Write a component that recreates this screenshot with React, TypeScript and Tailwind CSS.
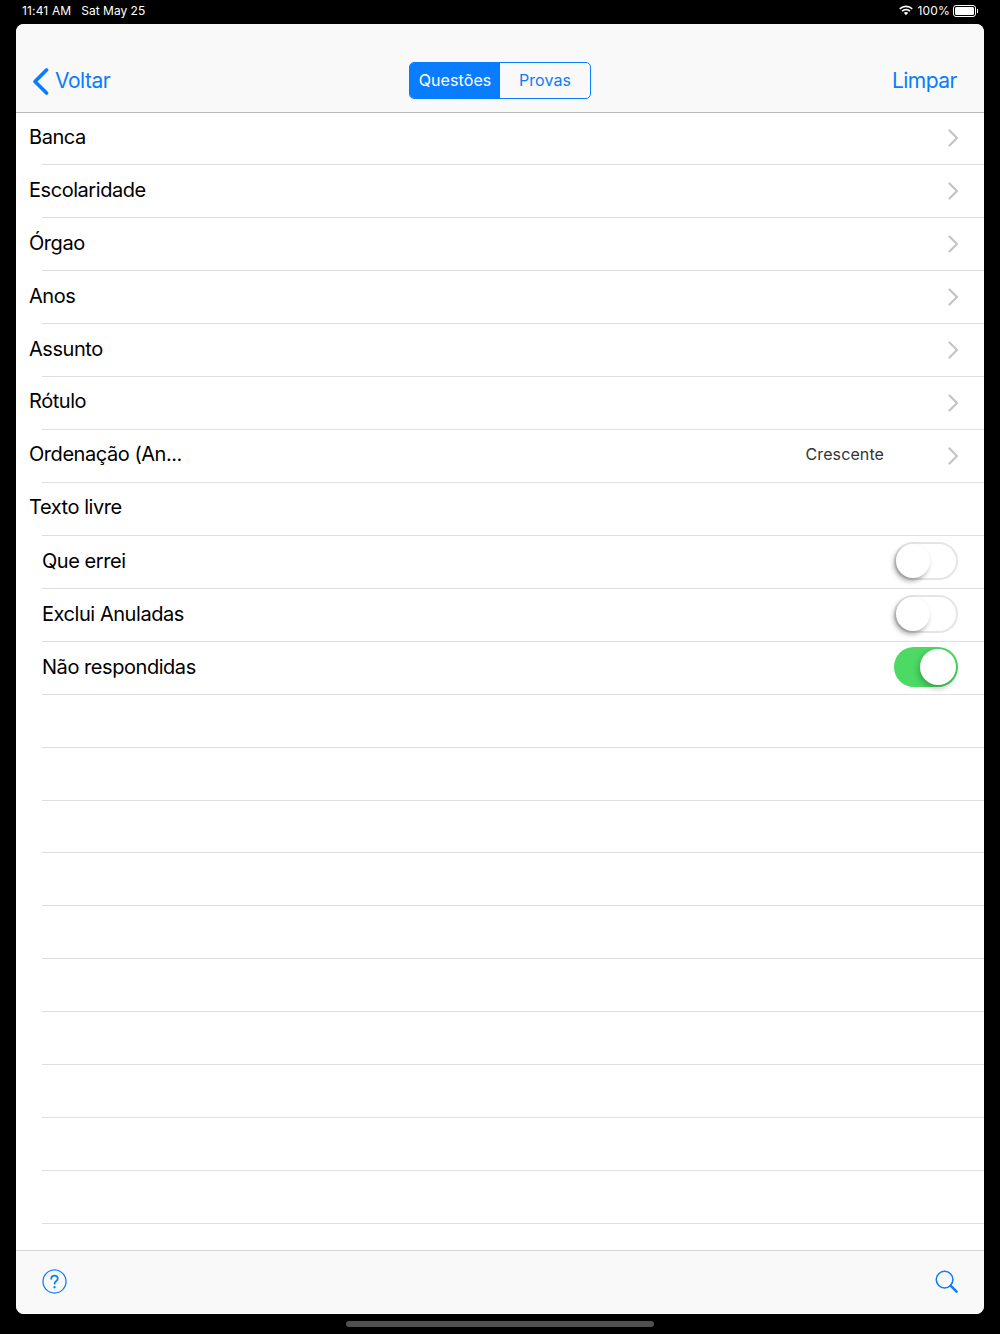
import React from 'react';

const font = { fontFamily: 'Inter, "Liberation Sans", sans-serif' };

const Chevron = () => (
  <svg width="12" height="18" viewBox="0 0 12 18" fill="none" className="shrink-0">
    <path d="M2.5 1.5 L10 9 L2.5 16.5" stroke="#c4c4c8" strokeWidth="2.2" strokeLinecap="round" strokeLinejoin="round" />
  </svg>
);

const Toggle = ({ on }: { on?: boolean }) =>
  on ? (
    <div className="relative h-[40px] w-[64px] rounded-full bg-[#4cd964]">
      <div className="absolute right-[2px] top-[2px] h-[36px] w-[36px] rounded-full bg-white shadow-[-1px_3px_6px_rgba(0,0,0,0.28)]" />
    </div>
  ) : (
    <div className="relative h-[38px] w-[64px] rounded-full border-2 border-[#e5e5e5] bg-white">
      <div className="absolute left-[0px] top-[0px] h-[34px] w-[34px] rounded-full bg-white shadow-[-2px_3px_5px_rgba(0,0,0,0.35)]" />
    </div>
  );

// row pitch in the picture is a hair under 53px
const Row = ({ children }: { children?: React.ReactNode }) => (
  <div className="flex h-[52.95px] flex-col">
    <div className="flex min-h-0 flex-1 items-center text-[20px] tracking-[-0.45px] text-black">{children}</div>
    <div className="ml-[26px] h-px shrink-0 bg-[#dedee0]" />
  </div>
);

const NavRow = ({ label, value }: { label: string; value?: string }) => (
  <Row>
    <span className="flex-1 pb-[3px] pl-[13px]">{label}</span>
    {value && <span className="mr-[63px] pb-[3px] text-[16px] tracking-[0.1px] text-[#333]">{value}</span>}
    <span className="mr-[25px] flex">
      <Chevron />
    </span>
  </Row>
);

const SwitchRow = ({ label, on }: { label: string; on?: boolean }) => (
  <Row>
    <div className="flex flex-1 items-center justify-between pr-[26px] pb-[2px] pl-[26px]">
      <span>{label}</span>
      <Toggle on={on} />
    </div>
  </Row>
);

const navItems = [
  { label: 'Banca' },
  { label: 'Escolaridade' },
  { label: 'Órgao' },
  { label: 'Anos' },
  { label: 'Assunto' },
  { label: 'Rótulo' },
  { label: 'Ordenação (An...', value: 'Crescente' },
];

const App: React.FC = () => {
  return (
    <div className="flex h-[1334px] w-[1000px] flex-col overflow-hidden bg-black" style={font}>
      {/* status bar */}
      <div className="flex h-[24px] shrink-0 items-start justify-between pt-[3px] pr-[22px] pl-[22px] text-[12px] leading-[15px] tracking-[0.15px] text-white">
        <div className="flex gap-[10px]">
          <span>11:41 AM</span>
          <span className="tracking-normal">Sat May 25</span>
        </div>
        <div className="flex items-center">
          <svg width="16" height="12" viewBox="0 0 16 12" fill="white" className="mr-[4px]">
            <path d="M8 2.2c2.2 0 4.2.9 5.7 2.3l1.1-1.2A9.9 9.9 0 0 0 8 .6 9.9 9.9 0 0 0 1.2 3.3l1.1 1.2A8.2 8.2 0 0 1 8 2.2z" />
            <path d="M8 5.4c1.3 0 2.5.5 3.4 1.3l1.1-1.2A6.6 6.6 0 0 0 8 3.8a6.6 6.6 0 0 0-4.5 1.7l1.1 1.2A5 5 0 0 1 8 5.4z" />
            <path d="M8 7c-.9 0-1.6.3-2.2.8L8 10.3l2.2-2.5C9.6 7.3 8.9 7 8 7z" />
          </svg>
          <span className="mr-[3px]">100%</span>
          <div className="flex items-center">
            <div className="h-[12px] w-[23px] rounded-[3px] border border-white p-[1px]">
              <div className="h-full w-full rounded-[1.5px] bg-white" />
            </div>
            <div className="ml-[1px] h-[4px] w-[1px] bg-white" />
          </div>
        </div>
      </div>

      {/* card */}
      <div className="mx-[16px] flex h-[1290px] shrink-0 flex-col overflow-hidden rounded-[8px] bg-white">
        <header className="flex h-[89px] shrink-0 items-center justify-between border-b border-[#b9b9bb] bg-[#f9f9f9] pt-[24px] pr-[27px] pl-[16px] text-[21px] tracking-[-0.5px] text-[#0a7cff]">
          <div className="flex w-[211px] items-center gap-[6px]">
            <svg width="17" height="27" viewBox="0 0 17 27" fill="none" className="mt-[2px]">
              <path d="M14.5 2 L3 13.5 L14.5 25" stroke="#0a7cff" strokeWidth="3.6" strokeLinecap="round" strokeLinejoin="round" />
            </svg>
            <span className="pt-[2px]">Voltar</span>
          </div>
          <div className="flex h-[37px] w-[182px] overflow-hidden rounded-[5px] border border-[#0a7cff] text-[16px] tracking-[0.1px]">
            <div className="flex w-[90px] items-center justify-center bg-[#0a7cff] text-white">Questões</div>
            <div className="flex flex-1 items-center justify-center">Provas</div>
          </div>
          <div className="w-[200px] pt-[2px] text-right">Limpar</div>
        </header>

        <main className="min-h-0 flex-1 overflow-hidden">
          <div className="-mt-[0.7px]">
            {navItems.map((item) => (
              <NavRow key={item.label} label={item.label} value={item.value} />
            ))}
            <Row>
              <span className="pb-[3px] pl-[13px]">Texto livre</span>
            </Row>
            <SwitchRow label="Que errei" />
            <SwitchRow label="Exclui Anuladas" />
            <SwitchRow label="Não respondidas" on />
            {Array.from({ length: 10 }).map((_, i) => (
              <Row key={i} />
            ))}
          </div>
        </main>

        <footer className="flex h-[64px] shrink-0 items-center justify-between border-t border-[#d4d4d6] bg-[#f9f9f9] pr-[26px] pb-[3px] pl-[26px]">
          <svg width="25" height="25" viewBox="0 0 26 26" fill="none">
            <circle cx="13" cy="13" r="12" stroke="#0a7cff" strokeWidth="1.3" />
            <path d="M9.6 10.2c0-2 1.5-3.2 3.4-3.2s3.4 1.2 3.4 3c0 1.4-.8 2.1-1.8 2.8-1 .7-1.5 1.2-1.5 2.5" stroke="#0a7cff" strokeWidth="1.8" strokeLinecap="round" />
            <circle cx="13" cy="19" r="1.2" fill="#0a7cff" />
          </svg>
          <svg width="23" height="23" viewBox="0 0 24 24" fill="none">
            <circle cx="10" cy="10" r="8.7" stroke="#0a7cff" strokeWidth="1.6" />
            <path d="M16.3 16.3 L22.5 22.5" stroke="#0a7cff" strokeWidth="2.6" strokeLinecap="round" />
          </svg>
        </footer>
      </div>

      {/* home indicator */}
      <div className="flex flex-1 items-start justify-center pt-[7px]">
        <div className="h-[6px] w-[308px] rounded-full bg-[#505050]" />
      </div>
    </div>
  );
};

export default App;
